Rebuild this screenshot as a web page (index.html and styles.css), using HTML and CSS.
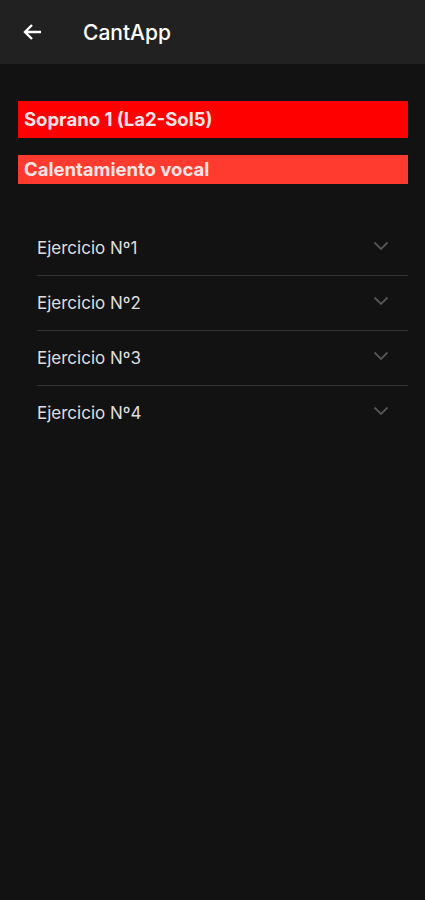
FILE: index.html
```html
<!DOCTYPE html>
<html lang="es">
<head>
    <meta charset="UTF-8">
    <meta name="viewport" content="width=device-width, initial-scale=1.0">
    <title>CantApp</title>
    <link rel="stylesheet" href="styles.css">
</head>
<body>
    <header class="topbar">
        <button class="back" aria-label="Volver">
            <svg width="20" height="18" viewBox="0 0 20 18"><path d="M19 9H3M10 2 3 9l7 7" fill="none" stroke="#fff" stroke-width="2.4"/></svg>
        </button>
        <h1 class="title">CantApp</h1>
    </header>

    <main class="content">
        <div class="voice">Soprano 1 (La2-Sol5)</div>
        <div class="section">Calentamiento vocal</div>

        <ul class="exercises">
            <li class="exercise"><span>Ejercicio Nº1</span><svg class="chev" width="16" height="10" viewBox="0 0 16 10"><path d="M1.5 1.5 8 8l6.5-6.5" fill="none" stroke="#555" stroke-width="1.8"/></svg></li>
            <li class="exercise"><span>Ejercicio Nº2</span><svg class="chev" width="16" height="10" viewBox="0 0 16 10"><path d="M1.5 1.5 8 8l6.5-6.5" fill="none" stroke="#555" stroke-width="1.8"/></svg></li>
            <li class="exercise"><span>Ejercicio Nº3</span><svg class="chev" width="16" height="10" viewBox="0 0 16 10"><path d="M1.5 1.5 8 8l6.5-6.5" fill="none" stroke="#555" stroke-width="1.8"/></svg></li>
            <li class="exercise"><span>Ejercicio Nº4</span><svg class="chev" width="16" height="10" viewBox="0 0 16 10"><path d="M1.5 1.5 8 8l6.5-6.5" fill="none" stroke="#555" stroke-width="1.8"/></svg></li>
        </ul>
    </main>
</body>
</html>
```

FILE: styles.css
```css
body {
    margin: 0;
    background-color: #121212;
    font-family: Inter, "Liberation Sans", sans-serif;
    color: #fff;
    min-height: 900px;
}
.topbar {
    height: 64px;
    background-color: #212121;
    display: flex;
    align-items: center;
}
.back {
    background: none;
    border: none;
    padding: 0;
    margin-left: 22px;
    width: 20px;
    height: 18px;
    display: flex;
}
.title {
    margin: 0 0 0 41px;
    font-size: 21px;
    font-weight: 500;
}
.content {
    padding: 37px 17px 0 18px;
}
.voice {
    background-color: #ff0000;
    color: #ffe5e5;
    font-weight: bold;
    font-size: 18.5px;
    height: 37px;
    line-height: 37px;
    padding-left: 6px;
}
.section {
    margin-top: 17px;
    background-color: #ff3b30;
    color: #ffe5e5;
    font-weight: bold;
    font-size: 18.5px;
    height: 29px;
    line-height: 29px;
    padding-left: 6px;
}
.exercises {
    list-style: none;
    margin: 37px 0 0 19px;
    padding: 0;
}
.exercise {
    display: flex;
    justify-content: space-between;
    align-items: center;
    height: 54px;
    border-bottom: 1px solid #333;
    font-size: 17px;
    color: #dedede;
}
.exercise:last-child {
    border-bottom: none;
}
.chev {
    margin-right: 19px;
    margin-top: -4px;
}
```
